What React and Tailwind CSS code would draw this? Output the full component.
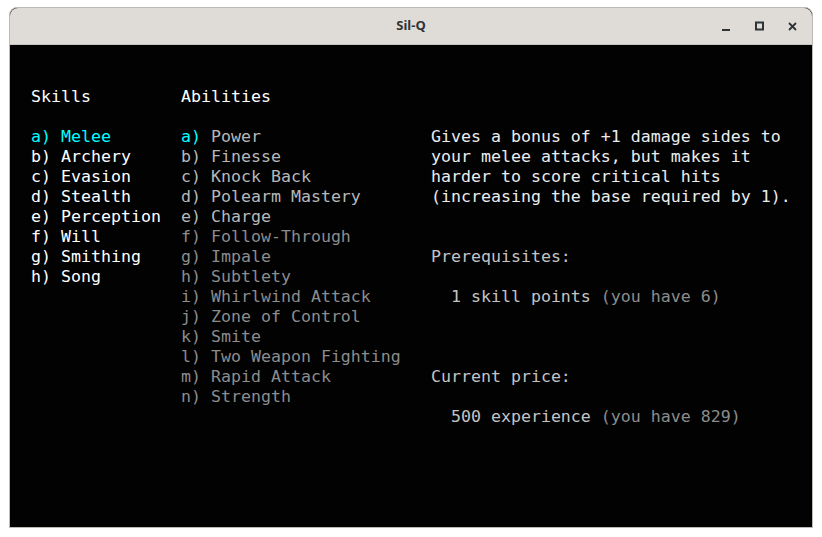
const skills = ['Melee', 'Archery', 'Evasion', 'Stealth', 'Perception', 'Will', 'Smithing', 'Song'];

const abilities = [
  ['Power', 'text-[#b8b8b8]'],
  ['Finesse', 'text-[#b8b8b8]'],
  ['Knock Back', 'text-[#b8b8b8]'],
  ['Polearm Mastery', 'text-[#b8b8b8]'],
  ['Charge', 'text-[#b8b8b8]'],
  ['Follow-Through', 'text-[#8c8c8c]'],
  ['Impale', 'text-[#8c8c8c]'],
  ['Subtlety', 'text-[#8c8c8c]'],
  ['Whirlwind Attack', 'text-[#8c8c8c]'],
  ['Zone of Control', 'text-[#8c8c8c]'],
  ['Smite', 'text-[#8c8c8c]'],
  ['Two Weapon Fighting', 'text-[#8c8c8c]'],
  ['Rapid Attack', 'text-[#8c8c8c]'],
  ['Strength', 'text-[#8c8c8c]'],
];

const letters = 'abcdefghijklmn';

function Line({ children, className = '' }) {
  return <div className={`h-5 whitespace-pre leading-5 ${className}`}>{children || ' '}</div>;
}

function TitleBar() {
  return (
    <div className="relative flex h-[37px] items-center justify-center rounded-t-[8px] border-b border-[#c6c2bd] bg-[#dfdcd8]">
      <span className="font-['Noto_Sans',sans-serif] text-[13px] font-bold text-[#2e3436]">Sil-Q</span>
      <div className="absolute right-[14px] top-0 flex h-full items-center gap-[22px] text-[#2e3436]">
        <svg width="11" height="11" viewBox="0 0 11 11">
          <rect x="1" y="8" width="8" height="2" fill="currentColor" />
        </svg>
        <svg width="11" height="11" viewBox="0 0 11 11">
          <rect x="2" y="1.5" width="7" height="7" fill="none" stroke="currentColor" strokeWidth="2" />
        </svg>
        <svg width="11" height="11" viewBox="0 0 11 11">
          <path d="M2 2 L9 9 M9 2 L2 9" stroke="currentColor" strokeWidth="1.8" />
        </svg>
      </div>
    </div>
  );
}

export default function App() {
  return (
    <div className="h-[537px] w-[822px] bg-white pl-[9px] pt-[7px]">
      <div className="flex h-[521px] w-[804px] flex-col rounded-t-[8px] border border-[#bdbab6] bg-black">
        <TitleBar />
        <div className="flex flex-1 bg-[#020202] pl-[21px] pt-[42px] font-['DejaVu_Sans_Mono',monospace] text-[16.6px] text-white">
          <div className="w-[150px]">
            <Line>Skills</Line>
            <Line />
            {skills.map((s, i) => (
              <Line key={s} className={i === 0 ? 'text-[#00ffff]' : 'text-white'}>
                {letters[i]}) {s}
              </Line>
            ))}
          </div>
          <div className="w-[250px]">
            <Line>Abilities</Line>
            <Line />
            {abilities.map(([name, color], i) => (
              <Line key={name} className={color}>
                <span className={i === 0 ? 'text-[#00ffff]' : ''}>{letters[i]})</span> {name}
              </Line>
            ))}
          </div>
          <div className="flex-1">
            <Line />
            <Line />
            <Line className="text-[#ececec]">Gives a bonus of +1 damage sides to</Line>
            <Line className="text-[#ececec]">your melee attacks, but makes it</Line>
            <Line className="text-[#ececec]">harder to score critical hits</Line>
            <Line className="text-[#ececec]">(increasing the base required by 1).</Line>
            <Line />
            <Line />
            <Line className="text-[#c4c4c4]">Prerequisites:</Line>
            <Line />
            <Line className="text-[#c4c4c4]">
              {'  1 skill points '}
              <span className="text-[#8c8c8c]">(you have 6)</span>
            </Line>
            <Line />
            <Line />
            <Line />
            <Line className="text-[#c4c4c4]">Current price:</Line>
            <Line />
            <Line className="text-[#c4c4c4]">
              {'  500 experience '}
              <span className="text-[#8c8c8c]">(you have 829)</span>
            </Line>
          </div>
        </div>
      </div>
    </div>
  );
}
